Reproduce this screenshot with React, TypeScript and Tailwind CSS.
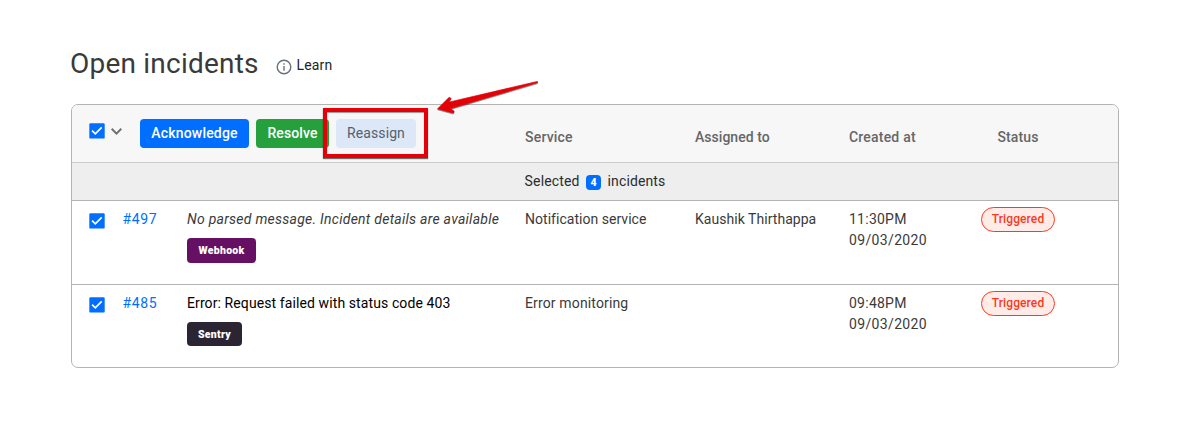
import type { ReactNode } from "react";

const columns =
  "grid grid-cols-[34px_64px_338px_170px_154px_132px_74px] pl-[17px]";

function Checkbox() {
  return (
    <svg className="block h-[17px] w-[17px] shrink-0" viewBox="0 0 17 17" fill="none">
      <rect x="0.3" y="1.2" width="15.4" height="15.4" rx="1.2" fill="#006fff" />
      <path d="M3.1 8.7L6.3 11.8L12.7 5.4" stroke="#fff" strokeWidth="1.7" />
    </svg>
  );
}

function Status() {
  return (
    <span className="mt-[6px] flex h-[25px] w-[74px] items-center justify-center rounded-full border border-[#fa3c1e] bg-[#ffebe8] text-[12px] font-medium tracking-[0.11px] text-[#f93a1c]">
      Triggered
    </span>
  );
}

function Row(props: {
  id: string;
  message: ReactNode;
  tag: ReactNode;
  service: ReactNode;
  assignee: ReactNode;
  time: string;
  date: string;
  className: string;
}) {
  return (
    <div className={`${columns} ${props.className} text-[14px] leading-[21px] text-[#3a3a3a]`}>
      <div className="pt-[11px]">
        <Checkbox />
      </div>
      <div className="-ml-[0.5px] pt-[8px] tracking-[0.6px] text-[#006fff]">{props.id}</div>
      <div className="pt-[8px]">
        <div className="whitespace-nowrap">{props.message}</div>
        {props.tag}
      </div>
      <div className="pt-[8px]">{props.service}</div>
      <div className="whitespace-nowrap pt-[8px] tracking-[0.04px]">{props.assignee}</div>
      <div className="pt-[8px]">
        <div className="tracking-[0.25px]">{props.time}</div>
        <div className="tracking-[0.35px]">{props.date}</div>
      </div>
      <Status />
    </div>
  );
}

export default function App() {
  return (
    <div className="relative h-[431px] w-[1196px] overflow-hidden bg-white pl-[71px] pt-[44px] font-['Roboto',sans-serif]">
      <header className="flex h-[60px] items-start">
        <h1 className="-ml-px w-[206px] whitespace-nowrap text-[28px] leading-[40px] tracking-[0.22px] text-[#3a3a3a]">
          Open incidents
        </h1>
        <svg className="mt-[15px] h-4 w-4" viewBox="0 0 16 16" fill="none">
          <circle cx="8" cy="8" r="6.8" stroke="#68717b" strokeWidth="1.4" />
          <path d="M8 7V11.8M8 4.2V5.8" stroke="#68717b" strokeWidth="1.4" />
        </svg>
        <span className="ml-[4.5px] mt-[11px] text-[14px] leading-[21px] tracking-[0.18px] text-[#212529]">
          Learn
        </span>
      </header>

      <main className="h-[264px] w-[1048px] overflow-hidden rounded-[7px] border border-[#b3b3b3] bg-white">
        <div
          className={`${columns} h-[58px] border-b border-[#cbcbcb] bg-[#f7f7f7] text-[14px] font-medium leading-[21px] text-[#666]`}
        >
          <div className="col-span-3 flex">
            <div className="pt-[17px]">
              <Checkbox />
            </div>
            <svg className="ml-[4px] mt-[22px] h-[9px] w-[13px]" viewBox="0 0 13 9" fill="none">
              <path d="M1.7 1.8L6.5 6.6L11.3 1.8" stroke="#707070" strokeWidth="2" />
            </svg>
            <div className="ml-[17px] mt-[14px] flex h-[29px] gap-[7px]">
              <button className="w-[109px] rounded-[4px] bg-[#006fff] tracking-[0.2px] text-white">
                Acknowledge
              </button>
              <button className="w-[73px] rounded-[4px] bg-[#269f3d] tracking-[0.1px] text-white">
                Resolve
              </button>
              <button className="w-[80px] rounded-[4px] bg-[#dce8f8] font-normal tracking-[0.1px] text-[#57606b]">
                Reassign
              </button>
            </div>
          </div>
          <div className="pt-[22px] tracking-[0.2px]">Service</div>
          <div className="pt-[22px] tracking-[0.03px]">Assigned to</div>
          <div className="pt-[22px] tracking-[0.2px]">Created at</div>
          <div className="pt-[22px] text-center tracking-[0.15px]">Status</div>
        </div>

        <div className="flex h-[38px] items-center justify-center border-b border-[#b3b3b3] bg-[#eee] text-[14px] leading-[21px] text-[#292c30]">
          <span className="tracking-[0.15px]">Selected</span>
          <span className="ml-[6.5px] mr-[6.5px] mt-[2px] flex h-[15px] w-[15px] items-center justify-center rounded-[4px] bg-[#006fff] text-[10.5px] font-black leading-[15px] text-white">
            4
          </span>
          <span className="tracking-[0.12px]">incidents</span>
        </div>

        <Row
          className="h-[84px] border-b border-[#b3b3b3]"
          id="#497"
          message={<em className="tracking-[0.26px]">No parsed message. Incident details are available</em>}
          tag={
            <span className="mt-[8px] flex h-[25px] w-[69px] items-center justify-center rounded-[4px] bg-[#651063] text-[10.5px] font-black tracking-[0.3px] text-white">
              Webhook
            </span>
          }
          service={<span className="tracking-[0.03px]">Notification service</span>}
          assignee="Kaushik Thirthappa"
          time="11:30PM"
          date="09/03/2020"
        />
        <Row
          className="h-[82px]"
          id="#485"
          message={
            <span className="tracking-[0.1px] text-black">Error: Request failed with status code 403</span>
          }
          tag={
            <span className="mt-[8px] flex h-[24px] w-[55px] items-center justify-center rounded-[4px] bg-[#2b2533] text-[10.5px] font-black tracking-[0.3px] text-white">
              Sentry
            </span>
          }
          service={<span className="tracking-[0.14px]">Error monitoring</span>}
          assignee=""
          time="09:48PM"
          date="09/03/2020"
        />
      </main>

      <div className="absolute left-[323px] top-[108px] h-[50px] w-[105px] border-4 border-[#e50008] shadow-[0_1px_1px_rgba(0,0,0,0.55),inset_0_1px_1px_rgba(0,0,0,0.4)]" />
      <svg
        className="absolute left-[430px] top-[76px] h-[44px] w-[116px] drop-shadow-[0_1px_0.6px_rgba(0,0,0,0.5)]"
        viewBox="430 76 116 44"
      >
        <path
          d="M437.6 108.8L449.2 97.2L451.1 98.4L448.6 102.2L537.4 81.4L537.6 82.6L450.5 108.5L454.2 111.2L453.3 113Z"
          fill="#e50008"
          stroke="#e50008"
          strokeWidth="0.7"
          strokeLinejoin="round"
        />
      </svg>
    </div>
  );
}
